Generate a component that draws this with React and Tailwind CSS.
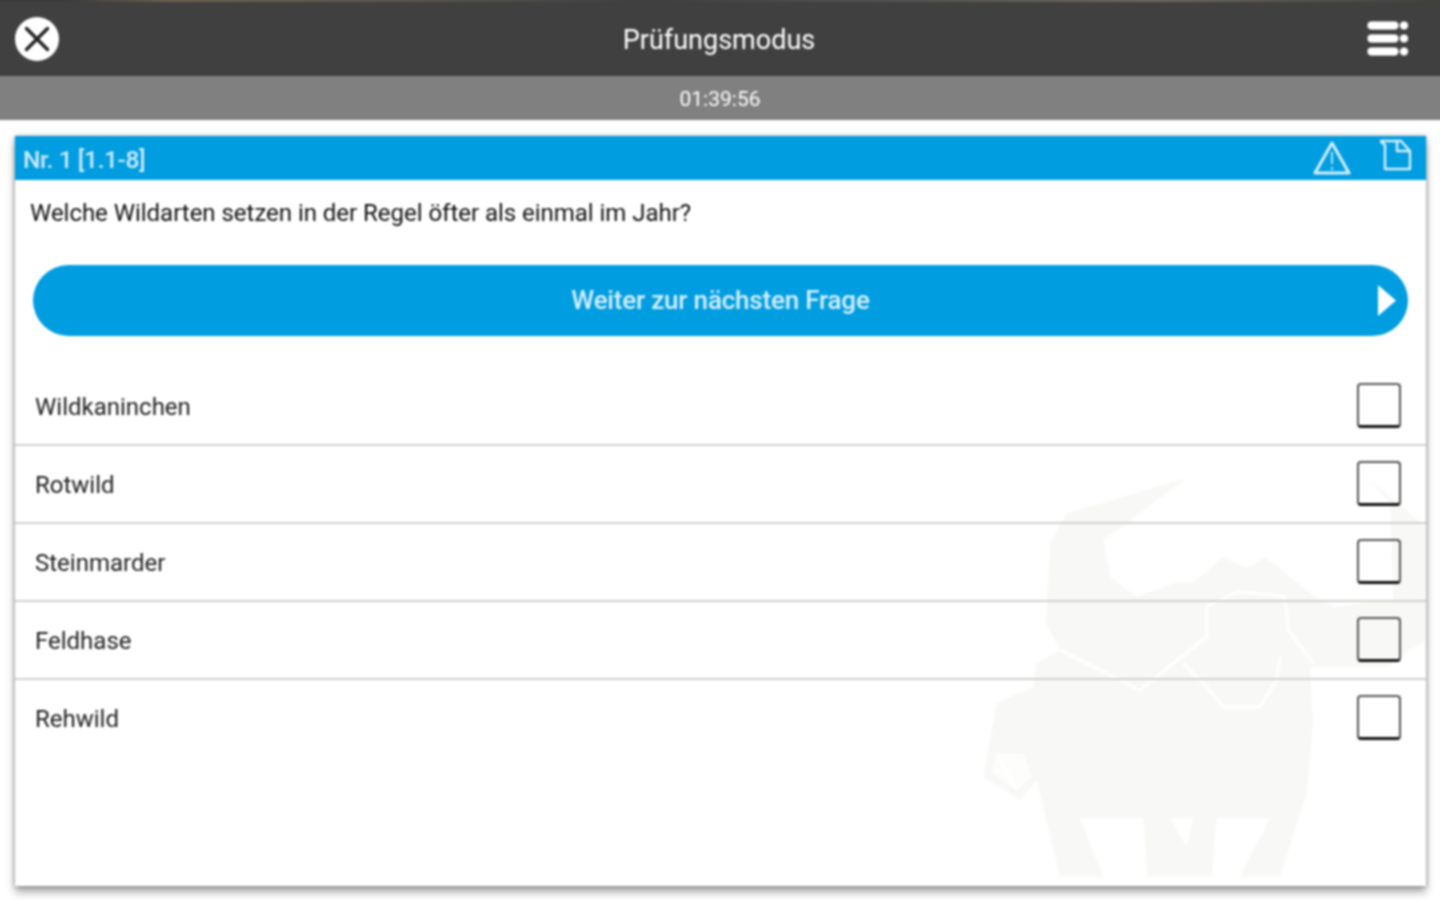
import React from "react";

const answers = ["Wildkaninchen", "Rotwild", "Steinmarder", "Feldhase", "Rehwild"];

function CloseIcon() {
  return (
    <svg width="46" height="46" viewBox="0 0 46 46">
      <circle cx="23" cy="23" r="22" fill="#fff" />
      <path d="M12.5 12.5 L33.5 33.5 M33.5 12.5 L12.5 33.5" stroke="#222" strokeWidth="3.4" strokeLinecap="round" />
    </svg>
  );
}

function MenuIcon() {
  return (
    <svg width="44" height="38" viewBox="0 0 44 38">
      <g fill="#fff" stroke="#1c1c1c" strokeWidth="0.6">
        <rect x="1" y="1" width="32" height="9" rx="4.5" />
        <rect x="1" y="14" width="32" height="9" rx="4.5" />
        <rect x="1" y="27" width="32" height="9" rx="4.5" />
        <circle cx="38" cy="5.5" r="4.5" />
        <circle cx="38" cy="18.5" r="4.5" />
        <circle cx="38" cy="31.5" r="4.5" />
      </g>
    </svg>
  );
}

function WarningIcon() {
  return (
    <svg width="38" height="36" viewBox="0 0 38 36" fill="none" stroke="#d5effb" strokeWidth="3" strokeLinejoin="round">
      <path d="M19 3 L36 33 L2 33 Z" />
      <path d="M19 12 V24 M19 27 V30" strokeWidth="1.6" />
    </svg>
  );
}

function NoteIcon() {
  return (
    <svg width="32" height="32" viewBox="0 0 32 32" fill="none" stroke="#d5effb" strokeWidth="2.4" strokeLinejoin="round">
      <path d="M0 2 L5 6 V30 H30 V12 L21 2 Z" />
      <path d="M17 3 V12 H30" />
    </svg>
  );
}

// watermark: a faint buffalo-like animal behind the answers
function Watermark() {
  return (
    <svg className="absolute left-[945px] top-[324px] pointer-events-none" width="466" height="426" viewBox="0 0 1398 1278">
      <path
        fill="#f8f8f6"
        d="M680 55 L320 160 L270 250 L258 490 L300 570 L230 610 L220 680 L110 730 L70 950 L180 1020 L230 960 L300 1250 L960 1250 L1040 1000 L1060 790 L1050 620 L1280 620 L1395 540 L1395 200 L1340 150 L1230 60 L1290 130 L1300 420 L1120 440 L1050 400 L915 290 L860 325 L790 290 L700 370 L640 370 L530 410 L450 350 L430 240 Z"
      />
      <g fill="#fff">
        <path d="M360 1075 L550 1075 L562 1250 L430 1250 Z" />
        <path d="M630 1075 L700 1075 L680 1160 Z" />
        <path d="M770 1075 L930 1075 L840 1250 L755 1250 Z" />
        <path d="M110 880 L190 880 L215 950 L170 990 L95 940 Z" opacity="0.7" />
      </g>
      <g fill="none" stroke="#fff" strokeWidth="9">
        <path d="M300 570 L540 690 L740 530 L740 440 L830 395 L975 410 L985 510 L1060 610" />
        <path d="M670 610 L740 680 L790 740 L900 740 L950 660 L960 590" />
        <path d="M110 880 L170 990" />
      </g>
    </svg>
  );
}

export default function App() {
  return (
    <div className="h-[900px] w-[1440px] overflow-hidden bg-white">
      {/* wider than the page so the blur doesn't fade at the edges */}
      <div className="-ml-1 -mt-1 w-[1448px] bg-white font-['Roboto',sans-serif] blur-[0.8px]">
        <div className="h-[6px] bg-[linear-gradient(90deg,#3c3c3c_5%,#6a5f4e_12%,#5a5650_28%,#3f3f3f_45%,#6a6660_80%,#403f3c_100%)]" />
        <header className="h-[74px] bg-[#404040] flex items-center justify-between pl-[18px] pr-[34px]">
          <CloseIcon />
          <h1 className="ml-[12px] pt-[2px] text-[27px] text-white">Prüfungsmodus</h1>
          <MenuIcon />
        </header>
        <div className="h-[44px] bg-[#808080] flex items-center justify-center text-[21px] text-white pt-[4px]">01:39:56</div>

        <div className="pl-[19px] pt-[16px] pb-[20px]">
          <section className="relative h-[750px] w-[1411px] bg-white shadow-[0_6px_8px_rgba(0,0,0,0.35),0_0_4px_rgba(0,0,0,0.35)]">
            <Watermark />
            <div className="relative h-[44px] bg-[#009de0] flex items-center justify-between pl-2 pr-[14px]">
              <span className="pt-[5px] text-[24.5px] font-medium tracking-[-0.4px] text-[#cfeafa]">Nr. 1 [1.1-8]</span>
              <div className="flex items-center gap-[29px]">
                <WarningIcon />
                <div className="-mt-[6px]"><NoteIcon /></div>
              </div>
            </div>
            <p className="relative pl-[15px] pt-[17px] text-[24px] leading-[32px] tracking-[-0.03px] text-[#111]">Welche Wildarten setzen in der Regel öfter als einmal im Jahr?</p>
            <button className="relative ml-[18px] mt-[36px] flex h-[71px] w-[1375px] items-center justify-center rounded-full bg-[#009de0] text-[26px] font-medium tracking-[-0.2px] text-[#d5effb]">
              Weiter zur nächsten Frage
              <svg className="absolute right-[11px] top-[19px]" width="20" height="33" viewBox="0 0 20 33">
                <path d="M1 1 L19 16.5 L1 32 Z" fill="#fff" />
              </svg>
            </button>
            <ul className="relative mt-[32px]">
              {answers.map((a, i) => (
                <li
                  key={a}
                  className={
                    "flex h-[78px] items-center justify-between pl-5 pr-[25px] " +
                    (i < answers.length - 1 ? "border-b-2 border-[#d0d0ce]" : "pb-[2px]")
                  }
                >
                  <span className="pt-[2px] text-[24px] text-[#222]">{a}</span>
                  <span className="-mt-[2px] h-[45px] w-[44px] rounded-[4px] border-2 border-b-[3px] border-[#555] border-b-[#111]" />
                </li>
              ))}
            </ul>
          </section>
        </div>
      </div>
    </div>
  );
}
